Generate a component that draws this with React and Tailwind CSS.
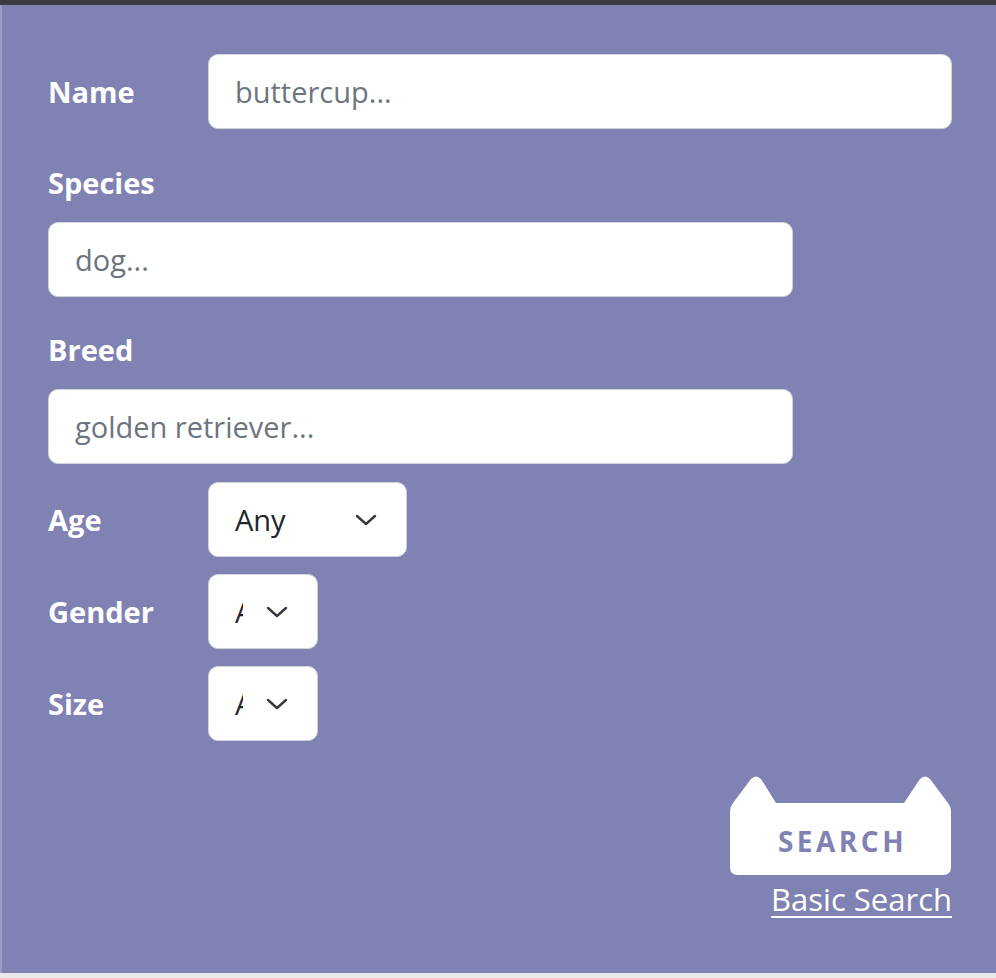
import React from "react";

const font = { fontFamily: "'Open Sans', Lato, sans-serif" };

function Chevron() {
  return (
    <svg width="22" height="12" viewBox="0 0 22 12" fill="none">
      <path d="M2 2l9 8 9-8" stroke="#343a40" strokeWidth="2.4" strokeLinecap="round" strokeLinejoin="round" />
    </svg>
  );
}

function TextInput({ placeholder, className }) {
  return (
    <input
      placeholder={placeholder}
      className={`h-[75px] rounded-[10px] border border-[#ced4da] bg-white px-[26px] text-[29px] text-[#212529] placeholder:text-[#6c757d] outline-none ${className}`}
    />
  );
}

function SelectBox({ width, clip }) {
  return (
    <div className={`flex h-[75px] items-center justify-between rounded-[10px] border border-[#ced4da] bg-white pl-[26px] pr-[29px] ${width}`}>
      {clip ? (
        <span className="block w-[8px] overflow-hidden whitespace-nowrap text-[29px] text-[#212529]">Any</span>
      ) : (
        <span className="text-[29px] text-[#212529]">Any</span>
      )}
      <Chevron />
    </div>
  );
}

export default function App() {
  return (
    <div style={font} className="h-[978px] w-[996px] bg-[#e9e9ea]">
      <div className="h-[5px] bg-[#3b3b40]" />
      <div className="flex h-[968px] flex-col border-l-[2px] border-[#9a9cc6] bg-[#7f82b3] pl-[46px] pr-[44px] text-white">
        <div className="mt-[49px] flex items-center">
          <label className="w-[160px] text-[29px] font-bold">Name</label>
          <TextInput placeholder="buttercup..." className="w-[744px]" />
        </div>
        <label className="mt-[34px] text-[29px] font-bold leading-[40px]">Species</label>
        <TextInput placeholder="dog..." className="mt-[19px] w-[745px]" />
        <label className="mt-[33px] text-[29px] font-bold leading-[40px]">Breed</label>
        <TextInput placeholder="golden retriever..." className="mt-[19px] w-[745px]" />
        <div className="mt-[18px] flex items-center">
          <label className="w-[160px] text-[29px] font-bold">Age</label>
          <SelectBox width="w-[199px]" />
        </div>
        <div className="mt-[17px] flex items-center">
          <label className="w-[160px] text-[29px] font-bold">Gender</label>
          <SelectBox width="w-[110px]" clip />
        </div>
        <div className="mt-[17px] flex items-center">
          <label className="w-[160px] text-[29px] font-bold">Size</label>
          <SelectBox width="w-[110px]" clip />
        </div>
        <div className="mt-[34px] flex flex-col items-end">
          <button className="relative h-[101px] w-[222px]">
            <svg className="absolute inset-0" width="222" height="101" viewBox="0 0 222 101">
              <path
                d="M0 36 Q0 32 3 28 L21 4 Q26 -1 31 4 L46 28 L174 28 L190 4 Q195 -1 200 4 L218 28 Q221 32 221 36 L221 92 Q221 100 213 100 L8 100 Q0 100 0 92 Z"
                fill="#ffffff"
              />
            </svg>
            <span className="relative mt-[30px] block pl-[3px] text-center text-[28px] font-bold leading-[40px] tracking-[3.5px] text-[#7f82b3]">SEARCH</span>
          </button>
          <a className="mt-[5px] text-[31px] leading-[36px] underline underline-offset-[5px] decoration-[2px]">Basic Search</a>
        </div>
      </div>
    </div>
  );
}
